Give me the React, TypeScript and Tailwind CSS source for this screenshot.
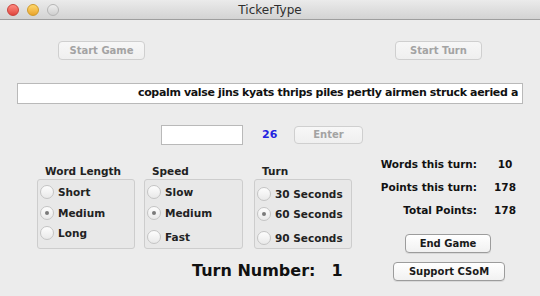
import React from "react";

const font = { fontFamily: '"DejaVu Sans", "Liberation Sans", sans-serif' };

interface BtnProps {
  label: string;
  disabled?: boolean;
  className?: string;
}

const MacButton: React.FC<BtnProps> = ({ label, disabled, className }) => (
  <button
    className={
      "flex shrink-0 items-center justify-center rounded-[4px] border bg-gradient-to-b text-[10px] font-bold leading-none " +
      (disabled
        ? "border-[#cfcfcf] from-[#f7f7f7] to-[#efefef] text-[#a3a3a3] "
        : "border-[#9c9c9c] from-[#ffffff] to-[#f1f1f1] text-[#1a1a1a] shadow-[0_1px_0_rgba(0,0,0,0.08)] ") +
      (className ?? "")
    }
  >
    {label}
  </button>
);

const Radio: React.FC<{ label: string; checked?: boolean; className?: string }> = ({
  label,
  checked,
  className,
}) => (
  <div className={"flex h-[14px] items-center gap-[4px] " + (className ?? "")}>
    <div className="flex h-[14px] w-[14px] shrink-0 items-center justify-center rounded-full border border-[#c4c4c4] bg-gradient-to-b from-[#fdfdfd] to-[#e9e9e9]">
      {checked && <div className="h-[4px] w-[4px] rounded-full bg-[#7a7a7a]" />}
    </div>
    <span className="whitespace-nowrap text-[10.5px] font-bold leading-[14px] text-[#222]">{label}</span>
  </div>
);

const Group: React.FC<{
  title: string;
  width: string;
  children: React.ReactNode;
}> = ({ title, width, children }) => (
  <div className={"flex flex-col " + width}>
    <div className="h-[15px] pl-[8px] text-[10.5px] font-bold leading-[14px] text-[#222]">{title}</div>
    <div className="flex h-[70px] flex-col rounded-[3px] border border-[#cdcdcd] bg-[#e8e8e8] pl-[2px]">
      {children}
    </div>
  </div>
);

export default function App() {
  return (
    <div className="flex h-[296px] w-[540px] flex-col overflow-hidden bg-[#ececec]" style={font}>
      {/* title bar */}
      <div className="relative flex h-[20px] shrink-0 items-center border-b border-[#9e9e9e] bg-gradient-to-b from-[#ebebeb] to-[#d3d3d3]">
        <div className="flex gap-[8px] pl-[7px]">
          <div className="h-[12px] w-[12px] rounded-full border border-[#c8413b] bg-gradient-to-b from-[#ff8a80] to-[#e0443e]" />
          <div className="h-[12px] w-[12px] rounded-full border border-[#cf9a2a] bg-gradient-to-b from-[#ffd86a] to-[#e9a42a]" />
          <div className="h-[12px] w-[12px] rounded-full border border-[#b5b5b5] bg-gradient-to-b from-[#eeeeee] to-[#cfcfcf]" />
        </div>
        <div className="absolute inset-0 flex items-center justify-center text-[12px] text-[#2e2e2e]">
          TickerType
        </div>
      </div>

      {/* top buttons */}
      <div className="mt-[21px] flex shrink-0 pl-[58px]">
        <MacButton label="Start Game" disabled className="h-[19px] w-[87px]" />
        <MacButton label="Start Turn" disabled className="ml-[250px] h-[19px] w-[87px]" />
      </div>

      {/* ticker */}
      <div className="mx-[17px] mt-[23px] flex h-[21px] shrink-0 items-center justify-end overflow-hidden whitespace-nowrap border border-[#b9b9b9] bg-white pr-[4px] text-[11px] font-bold tracking-[-0.35px] text-[#111]">
        copalm valse jins kyats thrips piles pertly airmen struck aeried a
      </div>

      {/* input row */}
      <div className="mt-[21px] flex shrink-0 items-center pl-[161px]">
        <div className="h-[20px] w-[82px] border border-[#b9b9b9] bg-white" />
        <span className="ml-[19px] w-[31px] text-[11px] font-bold text-[#2323e0]">26</span>
        <MacButton label="Enter" disabled className="ml-[1px] h-[18px] w-[69px]" />
      </div>

      {/* bottom section */}
      <div className="mt-[12px] flex shrink-0">
        <div className="flex flex-col pl-[37px] pt-[7px]">
          <div className="flex">
            <Group title="Word Length" width="w-[98px]">
              <Radio label="Short" className="mt-[5px]" />
              <Radio label="Medium" checked className="mt-[7px]" />
              <Radio label="Long" className="mt-[6px]" />
            </Group>
            <Group title="Speed" width="ml-[9px] w-[99px]">
              <Radio label="Slow" className="mt-[5px]" />
              <Radio label="Medium" checked className="mt-[7px]" />
              <Radio label="Fast" className="mt-[10px]" />
            </Group>
            <Group title="Turn" width="ml-[11px] w-[98px]">
              <Radio label="30 Seconds" className="mt-[7px]" />
              <Radio label="60 Seconds" checked className="mt-[6px]" />
              <Radio label="90 Seconds" className="mt-[10px]" />
            </Group>
          </div>
          <div className="mt-[12px] flex pl-[155px] text-[16px] font-bold leading-[20px] text-[#111]">
            <span>Turn Number:</span>
            <span className="ml-[16px]">1</span>
          </div>
        </div>

        <div className="ml-[28px] flex flex-col">
          <div className="grid grid-cols-[97px_56px] gap-y-[9px] whitespace-nowrap text-[10.5px] font-bold leading-[14px] text-[#111]">
            <span className="text-right">Words this turn:</span>
            <span className="text-center">10</span>
            <span className="text-right">Points this turn:</span>
            <span className="text-center">178</span>
            <span className="text-right">Total Points:</span>
            <span className="text-center">178</span>
          </div>
          <MacButton label="End Game" className="ml-[25px] mt-[17px] h-[19px] w-[86px]" />
          <MacButton label="Support CSoM" className="ml-[13px] mt-[9px] h-[19px] w-[112px]" />
        </div>
      </div>
    </div>
  );
}
